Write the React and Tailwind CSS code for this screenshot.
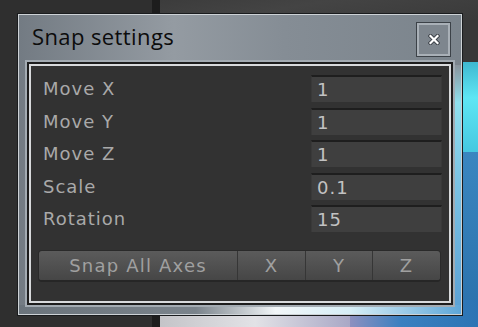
const ROWS = [
  { label: "Move X", value: "1" },
  { label: "Move Y", value: "1" },
  { label: "Move Z", value: "1" },
  { label: "Scale", value: "0.1" },
  { label: "Rotation", value: "15" },
];

const AXES = [
  { label: "Snap All Axes", width: "w-[198px]" },
  { label: "X", width: "w-[68px]" },
  { label: "Y", width: "w-[67px]" },
  { label: "Z", width: "flex-1" },
];

export default function App() {
  return (
    <div className="relative w-[478px] h-[327px] overflow-hidden bg-[#383838]">
      {/* scene behind the window */}
      <div className="absolute left-0 top-0 w-[152px] h-full bg-[#2f2f2f]" />
      <div className="absolute left-[152px] top-0 w-[8px] h-full bg-[#1d1d1d]" />
      <div className="absolute left-[160px] top-0 right-0 h-[20px] bg-[linear-gradient(170deg,#3c3c3c,#444_40%,#3a3a3a)]" />
      <div className="absolute left-[440px] top-[62px] right-0 h-[90px] bg-[linear-gradient(180deg,#3fb8d0,#5ee6f4_40%,#45c8e0)]" />
      <div className="absolute left-[440px] top-[152px] right-0 bottom-0 bg-[linear-gradient(180deg,#3a86c0,#2a70aa)]" />
      <div className="absolute left-[160px] top-[300px] w-[190px] bottom-0 bg-[linear-gradient(90deg,#c4c4c8,#e2e2e6_50%,#a9a8c6)]" />
      <div className="absolute left-[350px] top-[300px] right-0 bottom-0 bg-[linear-gradient(90deg,#8c90c0,#3a80c0_40%,#2c74b4)]" />

      {/* window */}
      <div className="absolute left-[17px] top-[13px] w-[446px] h-[303px] border border-[#1a1c1e]">
        <div className="relative h-full border border-[#cdd2d6] bg-[linear-gradient(90deg,#737b83_0%,#949ba2_35%,#858d95_60%,#7b848c_100%)] flex flex-col px-[6px] pb-[7px]">
          <div className="absolute right-0 top-[50px] w-[8px] bottom-0 bg-[linear-gradient(180deg,#8a939b,#8fe0ee_15%,#7cc4e4_45%,#5aa0d4)]" />
          <div className="absolute left-0 right-0 bottom-0 h-[9px] bg-[linear-gradient(90deg,#6b747c_0%,#7a838b_40%,#f2f6f8_58%,#d6eef6_75%,#5ea6d8_100%)]" />

          {/* title bar */}
          <div className="relative h-[45px] flex items-start justify-between">
            <span
              className="pl-[7px] pt-[8px] text-[22px] leading-[27px] tracking-[0.4px] text-[#0c0c0c]"
              style={{ fontFamily: '"Open Sans", "Noto Sans", sans-serif' }}
            >
              Snap settings
            </span>
            <button className="mt-[7px] mr-[4px] w-[35px] h-[35px] border border-[#3c4248] bg-[#7e868e] flex items-center justify-center">
              <span className="w-full h-full border-2 border-[#a9b0b7] flex items-center justify-center">
                <svg width="12" height="11" viewBox="0 0 12 11">
                  <path d="M2.5 2 L9.5 9 M9.5 2 L2.5 9" stroke="#3a3f46" strokeWidth="4" strokeLinecap="square" />
                  <path d="M2.5 2 L9.5 9 M9.5 2 L2.5 9" stroke="#ffffff" strokeWidth="2.2" strokeLinecap="square" />
                </svg>
              </span>
            </button>
          </div>

          {/* content panel */}
          <div className="relative z-10 border-2 border-[#a3abb2]">
            <div className="border-2 border-[#1d1d1d]">
              <div className="border-2 border-[#d8dadc]">
                <div
                  className="h-[235px] bg-[#323232] pt-[9px] px-[7px] flex flex-col"
                  style={{ fontFamily: '"DejaVu Sans", Verdana, sans-serif' }}
                >
                  <div className="flex flex-col gap-[5.5px]">
                    {ROWS.map((row) => (
                      <div key={row.label} className="h-[27px] flex items-center justify-between">
                        <span className="pl-[5px] text-[18px] tracking-[1px] text-[#a9a9a9]">
                          {row.label}
                        </span>
                        <div className="w-[131px] h-[27px] border-t-2 border-[#1e1e1e] border-x border-x-[#393939] bg-[#3f3f3f] flex items-center pl-[5px] text-[18px] tracking-[1px] text-[#c2c2c2]">
                          {row.value}
                        </div>
                      </div>
                    ))}
                  </div>

                  <div className="mt-[18px] mr-[1px] h-[32px] flex rounded-[4px] border border-[#2a2a2a] border-b-2 border-b-[#262626] overflow-hidden">
                    {AXES.map((axis, i) => (
                      <div
                        key={axis.label}
                        className={`${axis.width} h-full flex items-center justify-center bg-[linear-gradient(180deg,#5b5b5b,#464646)] text-[18px] tracking-[1.2px] text-[#a0a0a0] ${
                          i > 0 ? "border-l border-l-[#363636]" : ""
                        }`}
                      >
                        {axis.label}
                      </div>
                    ))}
                  </div>
                </div>
              </div>
            </div>
          </div>
        </div>
      </div>
    </div>
  );
}
